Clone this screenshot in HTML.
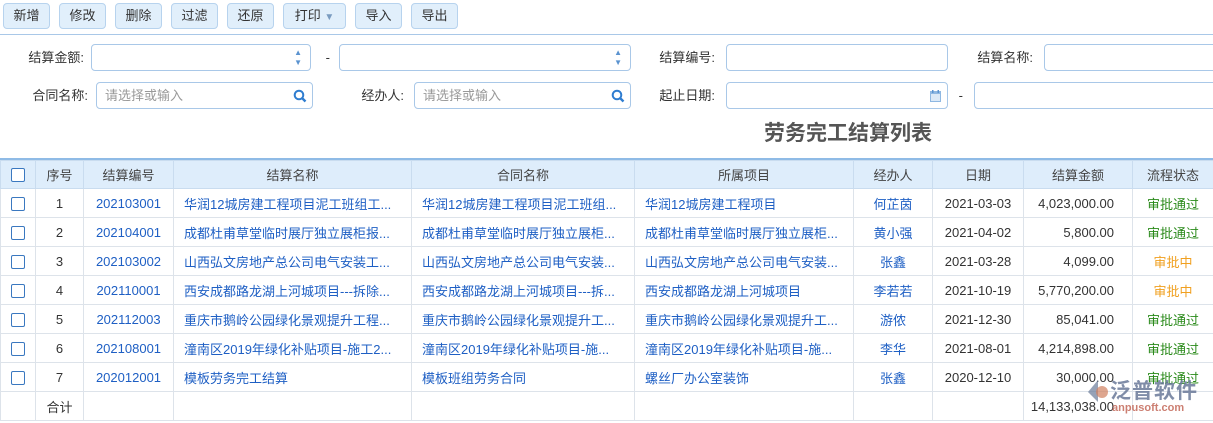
<!DOCTYPE html>
<html><head><meta charset="utf-8"><style>
*{box-sizing:border-box;margin:0;padding:0}
body{width:1213px;height:423px;overflow:hidden;background:#fff;font-family:"Liberation Sans","Noto Sans CJK SC",sans-serif;font-size:13px;color:#333;position:relative}
.btn{position:absolute;top:3px;height:26px;border:1px solid #b7d3ee;border-radius:4px;background:#e1effb;color:#333;font-size:13px;line-height:24px;text-align:center}
.lbl{position:absolute;font-size:13px;color:#333;text-align:right;line-height:27px}
.inp{position:absolute;height:27px;border:1px solid #a9c8e8;border-radius:4px;background:#fff;color:#999;font-size:13px;line-height:25px;padding-left:8px}
table{position:absolute;left:0;top:160px;border-collapse:collapse;table-layout:fixed;width:1213px}
td,th{border:1px solid #dde3ea;height:29px;text-align:center;font-weight:normal;white-space:nowrap;overflow:hidden;font-size:13px}
th{background:#deedfb;color:#444;height:28px;border-color:#c9dcef}
td.l{text-align:left;padding-left:10px}
.b{color:#1e5fc4}
.r{text-align:right!important;padding-right:18px}
.g{color:#2a8a1a}.o{color:#f0a020}
.cb{display:inline-block;width:14px;height:14px;border:1px solid #3a78c0;border-radius:2px;background:#fff;vertical-align:middle}
</style></head><body>
<div class="btn" style="left:3px;width:47px">新增</div>
<div class="btn" style="left:59px;width:47px">修改</div>
<div class="btn" style="left:115px;width:47px">删除</div>
<div class="btn" style="left:171px;width:47px">过滤</div>
<div class="btn" style="left:227px;width:47px">还原</div>
<div class="btn" style="left:283px;width:63px">打印 <span style="color:#7a9cc0;font-size:10px">▼</span></div>
<div class="btn" style="left:355px;width:47px">导入</div>
<div class="btn" style="left:411px;width:47px">导出</div>
<div style="position:absolute;left:0;top:34px;width:1213px;height:1px;background:#a9c8e8"></div>

<div class="lbl" style="left:0;width:84px;top:44px">结算金额:</div>
<div class="inp" style="left:91px;top:44px;width:220px"><span style="position:absolute;right:8px;top:0;color:#5b93d0;font-size:8px;line-height:10px;padding-top:3px">▲<br>▼</span></div>
<div class="lbl" style="left:322px;width:8px;top:44px">-</div>
<div class="inp" style="left:339px;top:44px;width:292px"><span style="position:absolute;right:8px;top:0;color:#5b93d0;font-size:8px;line-height:10px;padding-top:3px">▲<br>▼</span></div>
<div class="lbl" style="left:620px;width:95px;top:44px">结算编号:</div>
<div class="inp" style="left:726px;top:44px;width:222px"></div>
<div class="lbl" style="left:940px;width:93px;top:44px">结算名称:</div>
<div class="inp" style="left:1044px;top:44px;width:180px"></div>

<div class="lbl" style="left:0;width:88px;top:82px">合同名称:</div>
<div class="inp" style="left:96px;top:82px;width:217px">请选择或输入<svg style="position:absolute;right:5px;top:6px" width="14" height="14" viewBox="0 0 14 14"><circle cx="6" cy="6" r="4.3" fill="none" stroke="#2f7dd0" stroke-width="2"/><line x1="9" y1="9" x2="12.5" y2="12.5" stroke="#2f7dd0" stroke-width="2.4"/></svg></div>
<div class="lbl" style="left:340px;width:64px;top:82px">经办人:</div>
<div class="inp" style="left:414px;top:82px;width:217px">请选择或输入<svg style="position:absolute;right:5px;top:6px" width="14" height="14" viewBox="0 0 14 14"><circle cx="6" cy="6" r="4.3" fill="none" stroke="#2f7dd0" stroke-width="2"/><line x1="9" y1="9" x2="12.5" y2="12.5" stroke="#2f7dd0" stroke-width="2.4"/></svg></div>
<div class="lbl" style="left:620px;width:95px;top:82px">起止日期:</div>
<div class="inp" style="left:726px;top:82px;width:222px"><svg style="position:absolute;right:6px;top:7px" width="11" height="12" viewBox="0 0 11 12"><rect x="0" y="1" width="11" height="11" fill="#8fb8e2"/><rect x="1" y="4" width="9" height="7" fill="#dbe9f7"/><rect x="2" y="0" width="1.5" height="3" fill="#5b93d0"/><rect x="7.5" y="0" width="1.5" height="3" fill="#5b93d0"/></svg></div>
<div class="lbl" style="left:955px;width:8px;top:82px">-</div>
<div class="inp" style="left:974px;top:82px;width:250px"></div>

<div style="position:absolute;left:690px;width:316px;top:120px;text-align:center;font-size:21px;font-weight:bold;color:#555;line-height:28px">劳务完工结算列表</div>
<div style="position:absolute;left:0;top:158px;width:1213px;height:2px;background:#8fbbe6"></div>

<table>
<colgroup><col style="width:35px"><col style="width:48px"><col style="width:90px"><col style="width:238px"><col style="width:223px"><col style="width:219px"><col style="width:79px"><col style="width:91px"><col style="width:109px"><col style="width:81px"></colgroup>
<tr><th><span class="cb"></span></th><th>序号</th><th>结算编号</th><th>结算名称</th><th>合同名称</th><th>所属项目</th><th>经办人</th><th>日期</th><th>结算金额</th><th>流程状态</th></tr>
<tr><td><span class="cb"></span></td><td>1</td><td class="b">202103001</td><td class="l b">华润12城房建工程项目泥工班组工...</td><td class="l b">华润12城房建工程项目泥工班组...</td><td class="l b">华润12城房建工程项目</td><td class="b">何芷茵</td><td>2021-03-03</td><td class="r">4,023,000.00</td><td class="g">审批通过</td></tr>
<tr><td><span class="cb"></span></td><td>2</td><td class="b">202104001</td><td class="l b">成都杜甫草堂临时展厅独立展柜报...</td><td class="l b">成都杜甫草堂临时展厅独立展柜...</td><td class="l b">成都杜甫草堂临时展厅独立展柜...</td><td class="b">黄小强</td><td>2021-04-02</td><td class="r">5,800.00</td><td class="g">审批通过</td></tr>
<tr><td><span class="cb"></span></td><td>3</td><td class="b">202103002</td><td class="l b">山西弘文房地产总公司电气安装工...</td><td class="l b">山西弘文房地产总公司电气安装...</td><td class="l b">山西弘文房地产总公司电气安装...</td><td class="b">张鑫</td><td>2021-03-28</td><td class="r">4,099.00</td><td class="o">审批中</td></tr>
<tr><td><span class="cb"></span></td><td>4</td><td class="b">202110001</td><td class="l b">西安成都路龙湖上河城项目---拆除...</td><td class="l b">西安成都路龙湖上河城项目---拆...</td><td class="l b">西安成都路龙湖上河城项目</td><td class="b">李若若</td><td>2021-10-19</td><td class="r">5,770,200.00</td><td class="o">审批中</td></tr>
<tr><td><span class="cb"></span></td><td>5</td><td class="b">202112003</td><td class="l b">重庆市鹅岭公园绿化景观提升工程...</td><td class="l b">重庆市鹅岭公园绿化景观提升工...</td><td class="l b">重庆市鹅岭公园绿化景观提升工...</td><td class="b">游侬</td><td>2021-12-30</td><td class="r">85,041.00</td><td class="g">审批通过</td></tr>
<tr><td><span class="cb"></span></td><td>6</td><td class="b">202108001</td><td class="l b">潼南区2019年绿化补贴项目-施工2...</td><td class="l b">潼南区2019年绿化补贴项目-施...</td><td class="l b">潼南区2019年绿化补贴项目-施...</td><td class="b">李华</td><td>2021-08-01</td><td class="r">4,214,898.00</td><td class="g">审批通过</td></tr>
<tr><td><span class="cb"></span></td><td>7</td><td class="b">202012001</td><td class="l b">模板劳务完工结算</td><td class="l b">模板班组劳务合同</td><td class="l b">螺丝厂办公室装饰</td><td class="b">张鑫</td><td>2020-12-10</td><td class="r">30,000.00</td><td class="g">审批通过</td></tr>
<tr><td></td><td>合计</td><td></td><td></td><td></td><td></td><td></td><td></td><td class="r">14,133,038.00</td><td></td></tr>
</table>
<svg style="position:absolute;left:1085px;top:378px" width="26" height="26" viewBox="0 0 26 26"><path d="M13 2 L3 14 L13 24 Z" fill="#6a7a99" opacity=".7"/><circle cx="17" cy="14" r="6" fill="#d08060" opacity=".7"/></svg>
<div style="position:absolute;left:1110px;top:375px;font-size:21px;color:#6a7a99;opacity:.85;font-weight:bold;letter-spacing:1px">泛普软件</div>
<div style="position:absolute;left:1112px;top:402px;font-size:11px;color:#c06050;opacity:.8;font-weight:bold">anpusoft.com</div>
</body></html>
